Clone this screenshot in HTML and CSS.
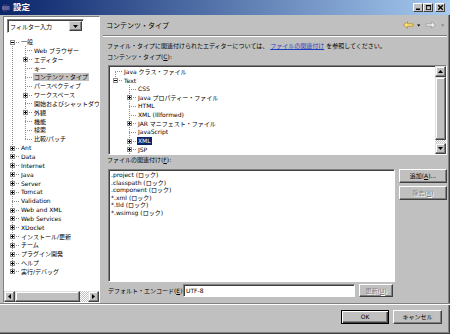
FILE: index.html
```html
<!DOCTYPE html>
<html lang="ja">
  <head>
    <meta charset="UTF-8" />
    <title>設定</title>
    <link rel="stylesheet" href="styles.css">
  </head>
  <body>
    <div class="window">
      <div class="titlebar">
        <svg class="app-icon" viewBox="0 0 8 8">
          <circle cx="4" cy="4" r="3.8" fill="#2d2a6e" />
          <path d="M1 3h6.5M1 5h6.5" stroke="#c8c8f0" stroke-width=".7" />
          <path d="M3.4 .3A3.8 3.8 0 0 0 3.4 7.7 2.6 3.7 0 0 1 3.4 .3z" fill="#fff" />
        </svg>
        <span class="title">設定</span>
        <div class="caption-btns">
          <span class="cap"><svg viewBox="0 0 7 7"><rect x="1" y="4.5" width="4" height="1.5" /></svg></span>
          <span class="cap"><svg viewBox="0 0 7 7"><path d="M1 1h5v5H1z M1.8 2.3v3h3.4v-3z" fill-rule="evenodd" /></svg></span>
          <span class="cap close"><svg viewBox="0 0 7 7"><path d="M1.2 1.2l4.6 4.6M5.8 1.2L1.2 5.8" stroke="#000" stroke-width="1.3" /></svg></span>
        </div>
      </div>

      <div class="main">
        <div class="nav-pane">
          <div class="combo">
            <span class="combo-text">フィルター入力</span>
            <span class="combo-btn"><svg width="5" height="3"><path d="M0 0h5L2.5 3z" /></svg></span>
          </div>

          <div class="tree nav-tree">
            <div class="tree-rows">
              <div class="row"><i class="tw"><b class="bx open"></b></i><span class="lbl">一般</span></div>
              <div class="kids">
                <div class="row"><i class="tw"></i><span class="lbl">Web ブラウザー</span></div>
                <div class="row"><i class="tw"><b class="bx"></b></i><span class="lbl">エディター</span></div>
                <div class="row"><i class="tw"></i><span class="lbl">キー</span></div>
                <div class="row"><i class="tw"></i><span class="lbl sel">コンテンツ・タイプ</span></div>
                <div class="row"><i class="tw"></i><span class="lbl">パースペクティブ</span></div>
                <div class="row"><i class="tw"><b class="bx"></b></i><span class="lbl">ワークスペース</span></div>
                <div class="row"><i class="tw"></i><span class="lbl">開始およびシャットダウン</span></div>
                <div class="row"><i class="tw"><b class="bx"></b></i><span class="lbl">外観</span></div>
                <div class="row"><i class="tw"></i><span class="lbl">機能</span></div>
                <div class="row"><i class="tw"></i><span class="lbl">検索</span></div>
                <div class="row"><i class="tw"></i><span class="lbl">比較/パッチ</span></div>
              </div>
              <div class="row"><i class="tw"><b class="bx"></b></i><span class="lbl">Ant</span></div>
              <div class="row"><i class="tw"><b class="bx"></b></i><span class="lbl">Data</span></div>
              <div class="row"><i class="tw"><b class="bx"></b></i><span class="lbl">Internet</span></div>
              <div class="row"><i class="tw"><b class="bx"></b></i><span class="lbl">Java</span></div>
              <div class="row"><i class="tw"><b class="bx"></b></i><span class="lbl">Server</span></div>
              <div class="row"><i class="tw"><b class="bx"></b></i><span class="lbl">Tomcat</span></div>
              <div class="row"><i class="tw"></i><span class="lbl">Validation</span></div>
              <div class="row"><i class="tw"><b class="bx"></b></i><span class="lbl">Web and XML</span></div>
              <div class="row"><i class="tw"><b class="bx"></b></i><span class="lbl">Web Services</span></div>
              <div class="row"><i class="tw"><b class="bx"></b></i><span class="lbl">XDoclet</span></div>
              <div class="row"><i class="tw"><b class="bx"></b></i><span class="lbl">インストール/更新</span></div>
              <div class="row"><i class="tw"><b class="bx"></b></i><span class="lbl">チーム</span></div>
              <div class="row"><i class="tw"><b class="bx"></b></i><span class="lbl">プラグイン開発</span></div>
              <div class="row"><i class="tw"><b class="bx"></b></i><span class="lbl">ヘルプ</span></div>
              <div class="row"><i class="tw"><b class="bx"></b></i><span class="lbl">実行/デバッグ</span></div>
            </div>
          </div>

          <div class="hscroll">
            <span class="sb-btn"><svg width="3" height="5"><path d="M3 0v5L0 2.5z" /></svg></span>
            <span class="sb-thumb"></span>
            <span class="sb-track"></span>
            <span class="sb-btn"><svg width="3" height="5"><path d="M0 0v5l3-2.5z" /></svg></span>
          </div>
        </div>

        <div class="sash"></div>

        <div class="page">
          <div class="page-head">
            <span class="page-title">コンテンツ・タイプ</span>
            <svg class="history" width="42" height="8" viewBox="0 0 42 8">
              <path d="M.5 4L4.5 .8v2h5.5v2.4H4.5v2z" fill="#fbe38c" stroke="#b88a1c" stroke-width=".8" />
              <path d="M14 3.5h3.4l-1.7 2z" fill="#000" />
              <path d="M32.5 4L28.5 .8v2H23v2.4h5.5v2z" fill="#ececec" stroke="#9a9a9a" stroke-width=".8" />
              <path d="M38 3.5h3.4l-1.7 2z" fill="#808080" />
            </svg>
          </div>

          <div class="page-body">
            <p class="desc">ファイル・タイプに関連付けられたエディターについては、 <a class="link">ファイルの関連付け</a> を参照してください。</p>
            <div class="label">コンテンツ・タイプ(<u>C</u>):</div>

            <div class="box types">
              <div class="tree type-tree">
                <div class="tree-rows roots-short">
                  <div class="row"><i class="tw"></i><span class="lbl">Java クラス・ファイル</span></div>
                  <div class="row"><i class="tw"><b class="bx open"></b></i><span class="lbl">Text</span></div>
                  <div class="kids open-end">
                    <div class="row"><i class="tw"></i><span class="lbl">CSS</span></div>
                    <div class="row"><i class="tw"><b class="bx"></b></i><span class="lbl">Java プロパティー・ファイル</span></div>
                    <div class="row"><i class="tw"></i><span class="lbl">HTML</span></div>
                    <div class="row"><i class="tw"></i><span class="lbl">XML (Illformed)</span></div>
                    <div class="row"><i class="tw"><b class="bx"></b></i><span class="lbl">JAR マニフェスト・ファイル</span></div>
                    <div class="row"><i class="tw"></i><span class="lbl">JavaScript</span></div>
                    <div class="row"><i class="tw"><b class="bx"></b></i><span class="lbl current">XML</span></div>
                    <div class="row"><i class="tw"><b class="bx"></b></i><span class="lbl">JSP</span></div>
                  </div>
                </div>
              </div>
              <div class="vscroll">
                <span class="sb-btn"><svg width="5" height="3"><path d="M0 3h5L2.5 0z" /></svg></span>
                <span class="sb-track"><span class="sb-thumb"></span></span>
                <span class="sb-btn"><svg width="5" height="3"><path d="M0 0h5L2.5 3z" /></svg></span>
              </div>
            </div>

            <div class="label label-assoc">ファイルの関連付け(<u>F</u>):</div>
            <div class="assoc">
              <div class="box list">
                <div>.project (ロック)</div>
                <div>.classpath (ロック)</div>
                <div>.component (ロック)</div>
                <div>*.xml (ロック)</div>
                <div>*.tld (ロック)</div>
                <div>*.wsimsg (ロック)</div>
              </div>
              <div class="side-btns">
                <button class="btn">追加(<u>A</u>)...</button>
                <button class="btn" disabled>除去(<u>R</u>)</button>
              </div>
            </div>

            <div class="enc-row">
              <span class="enc-label">デフォルト・エンコード(<u>E</u>):</span>
              <div class="box field">UTF-8</div>
              <button class="btn" disabled>更新(<u>U</u>)</button>
            </div>
          </div>
        </div>
      </div>

      <div class="footer">
        <button class="btn default">OK</button>
        <button class="btn">キャンセル</button>
      </div>
    </div>
  </body>
</html>
```

FILE: styles.css
```css
* {
  box-sizing: border-box;
}

html,
body {
  margin: 0;
}

body {
  width: 450px;
  height: 334px;
  overflow: hidden;
  background-color: #c0c0c0;
  font-family: "DejaVu Sans", "Noto Sans CJK JP", sans-serif;
  font-size: 6px;
  color: #000;
}

.window {
  display: flex;
  flex-direction: column;
  height: 334px;
  box-shadow: inset -1px -1px #404040, inset -2px -2px #808080;
}

/* title bar */
.titlebar {
  height: 15px;
  flex: none;
  display: flex;
  align-items: center;
  padding: 0 5px 0 2px;
  background: linear-gradient(90deg, #0a246a, #a6caf0);
  color: #fff;
}

.app-icon {
  width: 8px;
  height: 8px;
  margin-right: 3px;
}

.title {
  font-size: 8.5px;
  font-weight: bold;
  line-height: 1;
}

.caption-btns {
  margin-left: auto;
  display: flex;
}

.cap {
  width: 10px;
  height: 9px;
  display: flex;
  align-items: center;
  justify-content: center;
  background-color: #c0c0c0;
  border: 1px solid;
  border-color: #fff #404040 #404040 #fff;
}

.cap svg {
  width: 7px;
  height: 7px;
}

.cap.close {
  margin-left: 2px;
}

/* main area */
.main {
  height: 288px;
  flex: none;
  display: flex;
  padding: 0 3px 0 3px;
}

.nav-pane {
  width: 97px;
  margin-top: 1px;
  display: flex;
  flex-direction: column;
  background-color: #fff;
  border: 1px solid;
  border-color: #808080 #fff #fff #808080;
  overflow: hidden;
}

.sash {
  width: 3px;
  flex: none;
}

.combo {
  width: 77px;
  height: 14px;
  flex: none;
  margin: 2px 0 0 3px;
  display: flex;
  align-items: center;
  padding: 1px 1px 1px 2px;
  background-color: #fff;
  border: 1px solid;
  border-color: #808080 #fff #fff #808080;
  box-shadow: inset 1px 1px #404040;
}

.combo-btn {
  margin-left: auto;
  width: 13px;
  height: 10px;
  display: flex;
  align-items: center;
  justify-content: center;
  background-color: #c0c0c0;
  border: 1px solid;
  border-color: #e0e0e0 #404040 #404040 #e0e0e0;
  box-shadow: inset -1px -1px #808080;
}

/* trees */
.tree {
  --rh: 8.85px;
  --root: 6px;
  --kid: 19px;
  --dots: repeating-linear-gradient(#8c8c8c 0 1px, transparent 1px 2px);
  overflow: hidden;
}

.nav-tree {
  flex: 1;
  padding-top: 4.6px;
}

.type-tree {
  --rh: 8.65px;
  --root: 4px;
  --kid: 18px;
  flex: 1;
  padding-top: 1.6px;
}

.tree-rows {
  background: var(--dots) calc(var(--root) + 2px) calc(var(--rh) / 2) / 1px calc(100% - var(--rh)) no-repeat;
}

.tree-rows.roots-short {
  background-size: 1px var(--rh);
}

.kids {
  background: var(--dots) calc(var(--kid) + 2px) 0 / 1px calc(100% - var(--rh) / 2) no-repeat;
}

.kids.open-end {
  background-size: 1px 100%;
}

.row {
  height: var(--rh);
  display: flex;
  align-items: center;
  padding-left: var(--root);
  white-space: nowrap;
}

.kids .row {
  padding-left: var(--kid);
}

.tw {
  flex: none;
  width: 10px;
  height: 5px;
  display: flex;
  background: repeating-linear-gradient(90deg, #8c8c8c 0 1px, transparent 1px 2px) 2px 2px / 8px 1px no-repeat;
}

.bx {
  width: 5px;
  height: 5px;
  border: 1px solid #8c8c8c;
  background:
    linear-gradient(#000, #000) 0 1px / 3px 1px no-repeat,
    linear-gradient(#000, #000) 1px 0 / 1px 3px no-repeat,
    #fff;
}

.bx.open {
  background:
    linear-gradient(#000, #000) 0 1px / 3px 1px no-repeat,
    #fff;
}

.lbl {
  padding: 0 1px;
  line-height: 8px;
}

.lbl.sel {
  background-color: #c0c0c0;
}

.lbl.current {
  background-color: #0a246a;
  color: #fff;
}

/* scroll bars */
.sb-btn {
  flex: none;
  width: 11px;
  height: 11px;
  display: flex;
  align-items: center;
  justify-content: center;
  background-color: #c0c0c0;
  border: 1px solid;
  border-color: #e0e0e0 #404040 #404040 #e0e0e0;
  box-shadow: inset -1px -1px #808080, inset 1px 1px #fff;
}

.sb-thumb {
  display: block;
  background-color: #c0c0c0;
  border: 1px solid;
  border-color: #e0e0e0 #404040 #404040 #e0e0e0;
  box-shadow: inset -1px -1px #808080, inset 1px 1px #fff;
}

.sb-track {
  display: flex;
  flex: 1;
  background: repeating-conic-gradient(#fff 0 25%, #c0c0c0 0 50%) 0 0 / 2px 2px;
}

.hscroll {
  height: 11px;
  flex: none;
  display: flex;
}

.hscroll .sb-thumb {
  width: 65px;
}

.vscroll {
  width: 11px;
  flex: none;
  display: flex;
  flex-direction: column;
}

.vscroll .sb-track {
  flex-direction: column;
}

.vscroll .sb-thumb {
  flex: 1;
  margin-bottom: 3px;
}

/* preference page */
.page {
  flex: 1;
  display: flex;
  flex-direction: column;
}

.page-head {
  height: 21px;
  flex: none;
  display: flex;
  align-items: center;
  padding: 0 2px 0 3px;
  border-bottom: 1px solid #808080;
  box-shadow: 0 1px #fff;
}

.page-title {
  font-size: 7px;
}

.history {
  margin-left: auto;
}

.page-body {
  padding: 0 0 0 4px;
}

.desc {
  margin: 6px 0 0;
  line-height: 8px;
  white-space: nowrap;
}

.link {
  color: #1f3fbf;
  text-decoration: underline;
}

.label {
  margin-top: 3px;
  line-height: 8px;
}

.label-assoc {
  margin-top: 1px;
}

.box {
  background-color: #fff;
  border: 1px solid;
  border-color: #808080 #fff #fff #808080;
  box-shadow: inset 1px 1px #404040;
}

.types {
  height: 90px;
  margin: 4px 0 0 1px;
  display: flex;
  overflow: hidden;
}

.assoc {
  height: 113px;
  margin: 5px 0 0 1px;
  display: flex;
  gap: 4px;
}

.list {
  flex: 1;
  padding: 1px 0 0 2px;
  line-height: 7.5px;
  white-space: nowrap;
}

.side-btns {
  width: 48px;
  display: flex;
  flex-direction: column;
  gap: 3px;
}

.side-btns .btn {
  height: 14px;
}

.enc-row {
  height: 13px;
  margin: 2px 0 0 1px;
  display: flex;
  align-items: center;
}

.enc-label {
  width: 75px;
  white-space: nowrap;
}

.field {
  width: 172px;
  height: 13px;
  padding-left: 2px;
  line-height: 11px;
}

.enc-row .btn {
  width: 34px;
  height: 13px;
  margin-left: 4px;
}

/* buttons */
.btn {
  padding: 0;
  font-family: inherit;
  font-size: 6px;
  line-height: 1;
  color: #000;
  background-color: #c0c0c0;
  border: 1px solid;
  border-color: #fff #404040 #404040 #fff;
  box-shadow: inset -1px -1px #808080;
}

.btn:disabled {
  color: #808080;
  text-shadow: 1px 1px #fff;
}

.footer {
  flex: 1;
  display: flex;
  justify-content: flex-end;
  align-items: flex-start;
  gap: 4px;
  padding: 6px 8px 0 0;
  border-top: 1px solid #808080;
  box-shadow: inset 0 1px #fff;
}

.footer .btn {
  width: 48px;
  height: 14px;
}

.footer .btn + .btn {
  width: 49px;
}

.btn.default {
  border-color: #000;
  box-shadow: inset 1px 1px #fff, inset -1px -1px #404040, inset -2px -2px #808080;
}
```
